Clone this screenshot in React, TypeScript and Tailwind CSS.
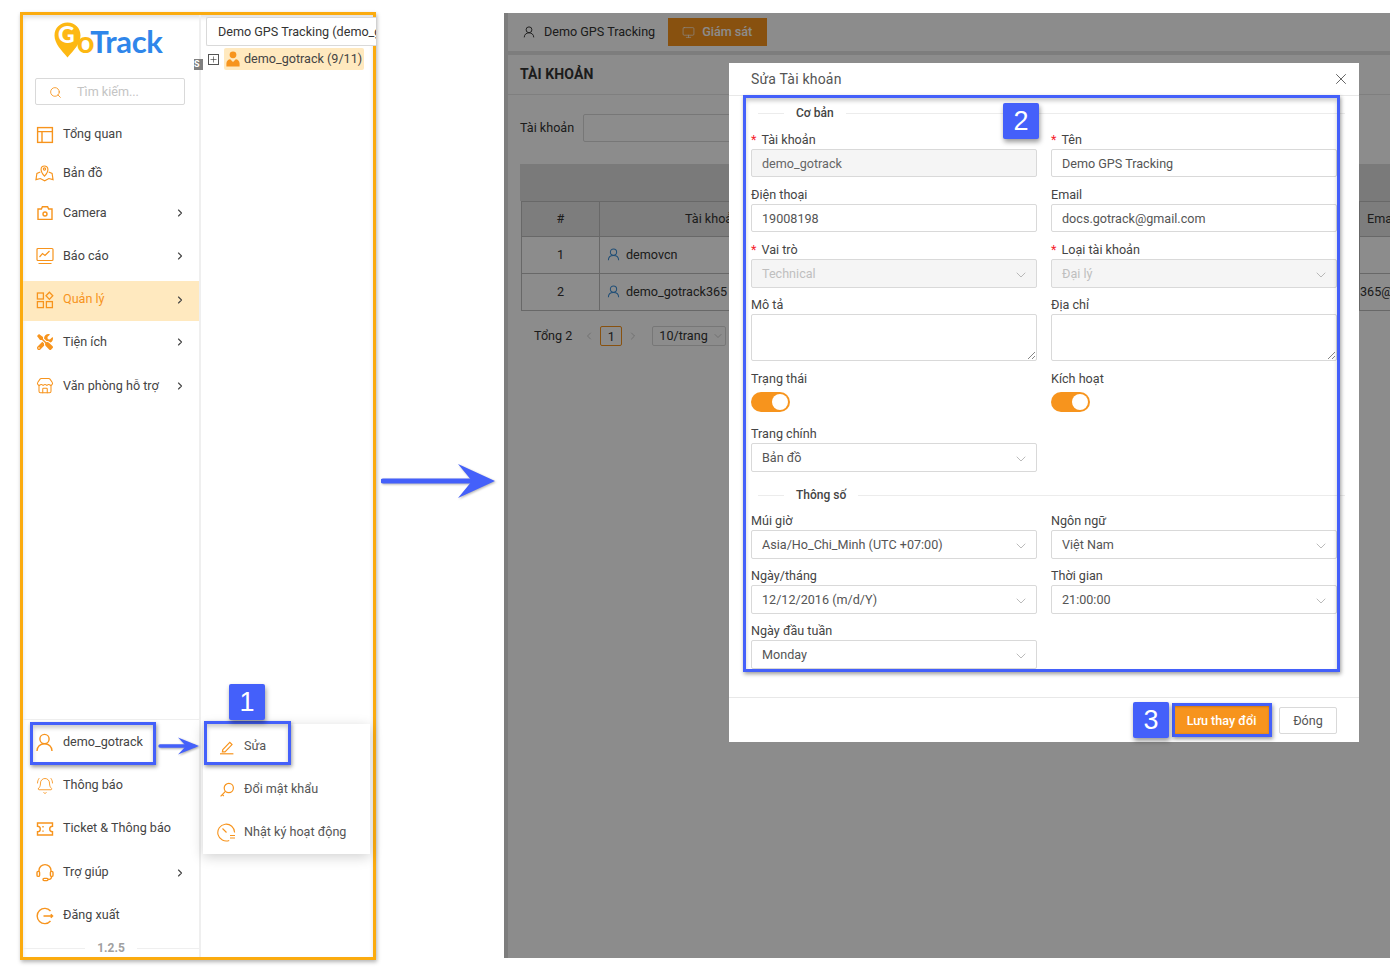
import { ChevronDown, ChevronRight, ChevronLeft, Search, Store, BellRing, X, Monitor, Plus } from 'lucide-react';
import { FaTools } from 'react-icons/fa';
import type { ReactNode } from 'react';

const orange = '#f7941d';

const IconOverview = () => (
  <svg width="18" height="18" viewBox="0 0 18 18" fill="none" stroke={orange} strokeWidth="1.4">
    <rect x="1.6" y="1.6" width="14.8" height="14.8" />
    <path d="M1.6 5.6h14.8M6 5.6v10.8" />
  </svg>
);

const IconMap = () => (
  <svg width="20" height="20" viewBox="0 0 20 20" fill="none" stroke={orange} strokeWidth="1.2">
    <path d="M10 13.4C8 11 6.4 8.8 6.4 6.2a3.6 3.6 0 0 1 7.2 0c0 2.6-1.6 4.8-3.6 7.2z" />
    <circle cx="10" cy="5.8" r="1.2" />
    <path d="M5.6 9L2 10.4 1 17l4.6-1.2 4.6 2.4 4.4-2.4 4.4 1.2-1-6.6L14.4 9" />
  </svg>
);

const IconCamera = () => (
  <svg width="18" height="18" viewBox="0 0 18 18" fill="none" stroke={orange} strokeWidth="1.4">
    <path d="M2 5h3.4l1-2.2h5.2l1 2.2H16v10.4H2z" />
    <circle cx="9" cy="10" r="2" />
  </svg>
);

const IconReport = () => (
  <svg width="18" height="18" viewBox="0 0 18 18" fill="none" stroke={orange} strokeWidth="1.2">
    <rect x="1" y="1.5" width="16" height="12" rx="1" />
    <path d="M3.5 10l3-3.5 2.5 2 4.5-4.5M2.5 16.5h13" />
  </svg>
);

const IconManage = () => (
  <svg width="18" height="18" viewBox="0 0 18 18" fill="none" stroke={orange} strokeWidth="1.3">
    <rect x="1.4" y="2" width="6" height="6" />
    <rect x="1.4" y="10.6" width="6" height="6" />
    <rect x="10.4" y="10.6" width="6" height="6" />
    <path d="M13.4 1.2l3.4 3.6-3.4 3.6-3.4-3.6z" />
  </svg>
);

const IconTicket = () => (
  <svg width="18" height="18" viewBox="0 0 18 18" fill="none" stroke={orange} strokeWidth="1.4">
    <path d="M1.5 3h15v3.2a2.8 2.8 0 0 0 0 5.6V15h-15v-3.2a2.8 2.8 0 0 0 0-5.6z" />
    <path d="M7 6v1.4M7 10.4v1.4" />
  </svg>
);

const IconHeadset = () => (
  <svg width="18" height="19" viewBox="0 0 18 19" fill="none" stroke={orange} strokeWidth="1.4">
    <path d="M3 9V7.6a6 6 0 0 1 12 0V9" />
    <rect x="1" y="8.4" width="2.6" height="5" rx="1.2" />
    <rect x="14.4" y="8.4" width="2.6" height="5" rx="1.2" />
    <path d="M15.6 13.4c0 2-1.6 3-3.6 3" />
    <rect x="7" y="15.4" width="5" height="2.2" rx="1" />
  </svg>
);

const IconUser = () => (
  <svg width="19" height="19" viewBox="0 0 19 19" fill="none" stroke={orange} strokeWidth="1.4">
    <circle cx="9.5" cy="6" r="4.6" />
    <path d="M2 18c0-4.4 3.2-7.2 7.5-7.2S17 13.6 17 18" />
  </svg>
);

const IconLogout = () => (
  <svg width="18" height="18" viewBox="0 0 18 18" fill="none" stroke={orange} strokeWidth="1.4">
    <path d="M14.5 4a7.6 7.6 0 1 0 0 10" />
    <path d="M7.5 9h9M14.8 7.2l1.8 1.8-1.8 1.8" />
  </svg>
);

const IconEdit = () => (
  <svg width="16" height="16" viewBox="0 0 16 16" fill="none" stroke={orange} strokeWidth="1.2">
    <path d="M3.8 10.6l7-7.2 2.2 2.2-7 7.2H3.4z" />
    <path d="M1 14.8h13.4" />
  </svg>
);

const IconKey = () => (
  <svg width="16" height="16" viewBox="0 0 16 16" fill="none" stroke={orange} strokeWidth="1.2">
    <circle cx="9.8" cy="6" r="4.6" />
    <path d="M6.4 9.4L1.6 14.4M3.4 12.6l1.4 1.4" />
  </svg>
);

const IconHistory = () => (
  <svg width="19" height="19" viewBox="0 0 19 19" fill="none" stroke={orange} strokeWidth="1.1">
    <path d="M17.6 9.5a8.4 8.4 0 1 0-5.4 7.9" />
    <path d="M5.5 5.5l4 4M13 12.5h5M13 15h5" />
  </svg>
);

const BossIcon = () => (
  <svg width="14" height="16" viewBox="0 0 14 16" fill={orange}>
    <circle cx="7" cy="3.8" r="3.4" />
    <path d="M0.4 15.4v-3c0-2.6 2-4 3.8-4.2L7 11l2.8-2.8c1.8.2 3.8 1.6 3.8 4.2v3z" />
  </svg>
);

const PersonOutline = ({ color, size }: { color: string; size: number }) => (
  <svg width={size} height={size} viewBox="0 0 19 19" fill="none" stroke={color} strokeWidth="1.5">
    <circle cx="9.5" cy="6" r="4.6" />
    <path d="M2 18c0-4.4 3.2-7.2 7.5-7.2S17 13.6 17 18" />
  </svg>
);

const GoLogo = () => (
  <div className="flex justify-center items-start pt-[6px] h-[63px] pr-[6px]">
    <svg width="27" height="36" viewBox="0 0 27 36" className="-mr-[4px] mt-[1px]">
      <path d="M13.5 0.5C6 0.5 0.5 6 0.5 13.5c0 8 7 15 13 22 6-7 13-14 13-22C26.5 6 21 0.5 13.5 0.5z" fill="#fdb813" />
      <text x="4" y="21" fontFamily="Lato, sans-serif" fontSize="23" fontWeight="900" fill="#fff">G</text>
    </svg>
    <span className="text-[31px] leading-[40px] font-bold tracking-[-0.4px] font-['Lato',sans-serif]">
      <span className="text-[#fdb813]">o</span>
      <span className="text-[#2f86ea]">Track</span>
    </span>
  </div>
);

type Item = { label: string; icon: ReactNode; chevron?: boolean; cls: string; active?: boolean };

const topItems: Item[] = [
  { label: 'Tổng quan', icon: <IconOverview />, cls: 'h-[39px] pt-[4px]' },
  { label: 'Bản đồ', icon: <IconMap />, cls: 'h-[40px] pt-[2px]' },
  { label: 'Camera', icon: <IconCamera />, chevron: true, cls: 'h-[40px] pt-[2px]' },
  { label: 'Báo cáo', icon: <IconReport />, chevron: true, cls: 'h-[40px] mt-[3px] pt-[2px]' },
  { label: 'Quản lý', icon: <IconManage />, chevron: true, cls: 'h-[40px] mt-[6px] pt-[1px] pb-[4px] bg-[#ffe9bf]', active: true },
  { label: 'Tiện ích', icon: <FaTools size={16} color={orange} />, chevron: true, cls: 'h-[40px] pt-[2px]' },
  { label: 'Văn phòng hỗ trợ', icon: <Store size={18} strokeWidth={1.4} color={orange} />, chevron: true, cls: 'h-[40px] mt-[4px] pt-[2px]' },
];

const bottomItems: Item[] = [
  { label: 'demo_gotrack', icon: <IconUser />, cls: 'h-[43px] pt-[2px]' },
  { label: 'Thông báo', icon: <BellRing size={18} strokeWidth={1.2} color={orange} />, cls: 'h-[43px] pt-[2px]' },
  { label: 'Ticket & Thông báo', icon: <IconTicket />, cls: 'h-[43px] pt-[2px]' },
  { label: 'Trợ giúp', icon: <IconHeadset />, chevron: true, cls: 'h-[43px] pt-[4px]' },
  { label: 'Đăng xuất', icon: <IconLogout />, cls: 'h-[43px] pt-[4px]' },
];

const NavRow = ({ item }: { item: Item }) => (
  <div className={`flex items-center pl-[12px] pr-[14px] text-[12.6px] ${item.cls} ${item.active ? 'text-[#f7941d]' : 'text-[#444]'}`}>
    <span className="w-[19px] flex justify-center shrink-0">{item.icon}</span>
    <span className="ml-[9px] flex-1 whitespace-nowrap">{item.label}</span>
    {item.chevron && <ChevronRight size={12} strokeWidth={2.2} color="#444" className="-mr-[1px]" />}
  </div>
);

const Sidebar = () => (
  <aside className="w-[178px] shrink-0 border-r-2 border-[#efefef] flex flex-col h-full">
    <GoLogo />
    <div className="ml-[12px] mr-[14px] h-[27px] border border-[#d9d9d9] rounded-[2px] flex items-center pl-[13px] pt-[2px] mb-[8px]">
      <Search size={13} color={orange} strokeWidth={1.6} />
      <span className="ml-[15px] text-[12.6px] text-[#c4c4c4]">Tìm kiếm...</span>
    </div>
    {topItems.map(item => <NavRow key={item.label} item={item} />)}
    <div className="mt-auto border-t border-[#efefef]">
      {bottomItems.map(item => <NavRow key={item.label} item={item} />)}
      <div className="h-[22px] pt-[4px] flex items-center">
        <div className="flex-1 h-px bg-[#efefef]" />
        <span className="px-[12px] text-[12px] font-bold text-[#a0a0a0]">1.2.5</span>
        <div className="flex-1 h-px bg-[#efefef]" />
      </div>
    </div>
  </aside>
);

const TreePane = () => (
  <div className="flex-1 min-w-0 relative pt-[2px] pl-[5px]">
    <div className="relative h-[29px] -mr-[3px] border border-r-0 border-[#d9d9d9] bg-white rounded-l-[2px] pl-[11px] text-[12.6px] text-[#333] leading-[27px] whitespace-nowrap overflow-hidden">
      Demo GPS Tracking (demo_g
    </div>
    <div className="flex items-center mt-[2px]">
      <span className="w-[11px] h-[11px] border border-[#555] flex items-center justify-center ml-[2px] mr-[5px]">
        <Plus size={9} strokeWidth={1.6} color="#333" />
      </span>
      <div className="flex items-center h-[22px] w-[140px] bg-[#ffe9bf] rounded-[2px] pl-[2px] text-[12.6px] text-[#444]">
        <BossIcon />
        <span className="ml-[4px] whitespace-nowrap">demo_gotrack (9/11)</span>
      </div>
    </div>
    <span className="absolute left-[-7px] top-[44px] w-[9px] h-[11px] bg-[#808080] text-white text-[9px] leading-[11px] font-bold overflow-hidden">S</span>
    <div className="absolute left-[2px] top-[709px] w-[167px] h-[130px] bg-white shadow-[0_3px_12px_rgba(0,0,0,0.18)]">
      {[
        { label: 'Sửa', icon: <IconEdit /> },
        { label: 'Đổi mật khẩu', icon: <IconKey /> },
        { label: 'Nhật ký hoạt động', icon: <IconHistory /> },
      ].map(row => (
        <div key={row.label} className="h-[43px] flex items-center pl-[14px] pt-[2px] text-[12.6px] text-[#555]">
          <span className="w-[19px] flex justify-center">{row.icon}</span>
          <span className="ml-[8px]">{row.label}</span>
        </div>
      ))}
    </div>
  </div>
);

const Label = ({ text, required }: { text: string; required?: boolean }) => (
  <div className="h-[19px] text-[12.6px] leading-[19px] text-[#444] whitespace-nowrap">
    {required && <span className="text-[#f5222d] mr-[5px]">*</span>}
    {text}
  </div>
);

const TextField = ({ label, value, required, disabled }: { label: string; value: string; required?: boolean; disabled?: boolean }) => (
  <div className="mb-[8px]">
    <Label text={label} required={required} />
    <div className={`h-[28px] border border-[#d9d9d9] rounded-[2px] px-[10px] text-[12.6px] leading-[27px] ${disabled ? 'bg-[#f5f5f5] text-[#666]' : 'text-[#555]'}`}>
      {value}
    </div>
  </div>
);

const SelectField = ({ label, value, required, disabled, cls }: { label: string; value: string; required?: boolean; disabled?: boolean; cls: string }) => (
  <div className={cls}>
    <Label text={label} required={required} />
    <div className={`h-[29px] border border-[#d9d9d9] rounded-[2px] pl-[10px] pr-[7px] pt-[2px] text-[12.6px] flex items-center justify-between ${disabled ? 'bg-[#f5f5f5] text-[#bfbfbf]' : 'text-[#555]'}`}>
      <span>{value}</span>
      <ChevronDown size={16} strokeWidth={1} color="#999" />
    </div>
  </div>
);

const AreaField = ({ label }: { label: string }) => (
  <div className="mb-[8px]">
    <Label text={label} />
    <div className="h-[47px] border border-[#d9d9d9] rounded-[2px] relative">
      <svg width="9" height="9" viewBox="0 0 9 9" className="absolute right-0 bottom-0" stroke="#666" strokeWidth="0.8">
        <path d="M1 8L8 1M5 8L8 5" />
      </svg>
    </div>
  </div>
);

const SwitchField = ({ label }: { label: string }) => (
  <div className="mb-[12px]">
    <Label text={label} />
    <div className="mt-[4px] w-[39px] h-[20px] rounded-full bg-[#f7941d] relative">
      <span className="absolute right-[2px] top-[2px] w-[16px] h-[16px] rounded-full bg-white" />
    </div>
  </div>
);

const Legend = ({ text, cls }: { text: string; cls: string }) => (
  <div className={`flex items-center ${cls}`}>
    <div className="w-[26px] ml-[7px] h-px bg-[#ececec]" />
    <span className="px-[12px] text-[12px] font-medium text-[#444] whitespace-nowrap">{text}</span>
    <div className="flex-1 h-px bg-[#ececec]" />
  </div>
);

const AccountModal = () => (
  <div className="absolute left-[225px] top-[50px] w-[630px] h-[679px] bg-white flex flex-col">
    <div className="h-[33px] shrink-0 border-b border-[#e8e8e8] flex items-center justify-between pl-[22px] pr-[9px] text-[14px] text-[#555] tracking-[0.2px]">
      <span>Sửa Tài khoản</span>
      <X size={18} strokeWidth={1.1} color="#444" />
    </div>
    <div className="flex-1 px-[22px]">
      <Legend text="Cơ bản" cls="h-[34px] mr-[-8px]" />
      <div className="grid grid-cols-2 gap-x-[14px]">
        <TextField label="Tài khoản" value="demo_gotrack" required disabled />
        <TextField label="Tên" value="Demo GPS Tracking" required />
        <TextField label="Điện thoại" value="19008198" />
        <TextField label="Email" value="docs.gotrack@gmail.com" />
        <SelectField label="Vai trò" value="Technical" required disabled cls="mb-[7px]" />
        <SelectField label="Loại tài khoản" value="Đại lý" required disabled cls="mb-[7px]" />
        <AreaField label="Mô tả" />
        <AreaField label="Địa chỉ" />
        <SwitchField label="Trạng thái" />
        <SwitchField label="Kích hoạt" />
        <SelectField label="Trang chính" value="Bản đồ" cls="" />
      </div>
      <Legend text="Thông số" cls="h-[34px] mt-[6px] mr-[-8px]" />
      <div className="grid grid-cols-2 gap-x-[14px] -mt-[1px]">
        <SelectField label="Múi giờ" value="Asia/Ho_Chi_Minh (UTC +07:00)" cls="mb-[7px]" />
        <SelectField label="Ngôn ngữ" value="Việt Nam" cls="mb-[7px]" />
        <SelectField label="Ngày/tháng" value="12/12/2016 (m/d/Y)" cls="mb-[7px]" />
        <SelectField label="Thời gian" value="21:00:00" cls="mb-[7px]" />
        <SelectField label="Ngày đầu tuần" value="Monday" cls="" />
      </div>
    </div>
    <div className="h-[45px] shrink-0 border-t border-[#e8e8e8] flex items-center justify-end gap-[9px] pr-[22px] text-[12.6px]">
      <button className="w-[97px] h-[29px] pt-[2px] bg-[#f7941d] text-white font-medium shadow-[inset_0_0_3px_rgba(120,60,0,0.7)]">Lưu thay đổi</button>
      <button className="w-[58px] h-[27px] pt-[2px] border border-[#d9d9d9] text-[#555] rounded-[2px]">Đóng</button>
    </div>
  </div>
);

const DimmedPage = () => (
  <div className="h-full pl-[4px] bg-[#e4e4e4] text-[12.6px] text-[#333]">
    <div className="h-[38px] bg-white flex items-center pl-[15px]">
      <PersonOutline color="#333" size={12} />
      <span className="ml-[9px]">Demo GPS Tracking</span>
      <span className="ml-[13px] w-[99px] h-[28px] bg-[#f7941d] text-white flex items-center pl-[14px] font-medium">
        <Monitor size={13} strokeWidth={1.2} />
        <span className="ml-[7px]">Giám sát</span>
      </span>
    </div>
    <div className="mt-[4px] h-[903px] bg-white">
      <div className="h-[40px] border-b border-[#e8e8e8] pl-[12px] flex items-center text-[14px] font-bold tracking-[0.1px]">TÀI KHOẢN</div>
      <div className="flex items-center pl-[12px] mt-[19px]">
        <span>Tài khoản</span>
        <span className="ml-[9px] w-[300px] h-[28px] border border-[#d9d9d9] rounded-[2px]" />
      </div>
      <div className="mt-[22px] ml-[12px] overflow-hidden">
        <div className="h-[37px] bg-[#dedede]" />
        <table className="w-[1000px] table-fixed border-collapse ml-[1px]">
          <tbody>
            <tr className="h-[35px] bg-[#e4e4e4]">
              <td className="w-[78px] border border-[#bdbdbd] text-center">#</td>
              <td className="w-[760px] border border-[#bdbdbd] pl-[85px]">Tài khoản</td>
              <td className="border border-[#bdbdbd] pl-[7px]">Email</td>
            </tr>
            <tr className="h-[37px]">
              <td className="border border-[#bdbdbd] text-center">1</td>
              <td className="border border-[#bdbdbd] pl-[7px]">
                <span className="flex items-center"><PersonOutline color="#3b8fd8" size={13} /><span className="ml-[6px]">demovcn</span></span>
              </td>
              <td className="border border-[#bdbdbd]" />
            </tr>
            <tr className="h-[37px]">
              <td className="border border-[#bdbdbd] text-center">2</td>
              <td className="border border-[#bdbdbd] pl-[7px]">
                <span className="flex items-center"><PersonOutline color="#3b8fd8" size={13} /><span className="ml-[6px]">demo_gotrack365</span></span>
              </td>
              <td className="border border-[#bdbdbd] pl-[7px] whitespace-nowrap overflow-hidden">
                <span className="block -ml-[7px]">365@gmail.com</span>
              </td>
            </tr>
          </tbody>
        </table>
      </div>
      <div className="flex items-center ml-[26px] mt-[15px] h-[20px]">
        <span>Tổng 2</span>
        <ChevronLeft size={12} strokeWidth={1} color="#999" className="ml-[11px]" />
        <span className="ml-[5px] w-[22px] h-[20px] border border-[#f7941d] rounded-[2px] text-center leading-[20px]">1</span>
        <ChevronRight size={12} strokeWidth={1} color="#999" className="ml-[5px]" />
        <span className="ml-[13px] w-[74px] h-[20px] border border-[#d9d9d9] rounded-[2px] pl-[6px] flex items-center">
          10/trang
          <ChevronDown size={12} strokeWidth={1} color="#999" className="ml-[4px]" />
        </span>
      </div>
    </div>
  </div>
);

const Badge = ({ text, cls }: { text: string; cls: string }) => (
  <div className={`absolute w-[36px] h-[36px] bg-[#4460fa] rounded-[2px] text-white text-[27px] leading-[37px] text-center shadow-[1px_3px_5px_rgba(0,0,0,0.4)] font-['Liberation_Sans',sans-serif] ${cls}`}>
    {text}
  </div>
);

const Frame = ({ cls }: { cls: string }) => (
  <div className={`absolute border-[3px] border-[#4460fa] shadow-[1px_2px_4px_rgba(0,0,0,0.4),inset_0_3px_4px_rgba(0,0,0,0.2)] ${cls}`} />
);

export default function App() {
  return (
    <div className="relative w-[1390px] h-[970px] bg-white overflow-hidden flex items-start font-['Roboto',sans-serif]">
      <div className="ml-[20px] mt-[12px] w-[356px] h-[948px] shrink-0 border-[3px] border-[#fbab0f] shadow-[1px_2px_4px_rgba(0,0,0,0.3),inset_0_3px_4px_rgba(0,0,0,0.12)] flex">
        <Sidebar />
        <TreePane />
      </div>

      <div className="relative ml-[128px] mt-[13px] w-[886px] h-[945px] shrink-0 overflow-hidden">
        <DimmedPage />
        <div className="absolute inset-0 bg-black/45" />
        <AccountModal />
      </div>

      <Frame cls="left-[30px] top-[722px] w-[126px] h-[43px]" />
      <Frame cls="left-[204px] top-[721px] w-[87px] h-[44px]" />
      <Frame cls="left-[743px] top-[95px] w-[597px] h-[577px]" />
      <div className="absolute left-[1172px] top-[703px] w-[100px] h-[34px] border-[3px] border-[#4460fa] shadow-[1px_2px_4px_rgba(0,0,0,0.4)]" />
      <Badge text="1" cls="left-[229px] top-[684px]" />
      <Badge text="2" cls="left-[1003px] top-[103px]" />
      <Badge text="3" cls="left-[1133px] top-[702px]" />

      <svg width="42" height="20" viewBox="0 0 42 20" className="absolute left-[158px] top-[736px] drop-shadow-[1px_1px_1px_rgba(0,0,0,0.35)]">
        <path d="M2 10H36" stroke="#4460fa" strokeWidth="3.4" strokeLinecap="round" />
        <path d="M20 1.5L41 10 20 18.5 28 10z" fill="#4460fa" />
      </svg>
      <svg width="116" height="38" viewBox="0 0 116 38" className="absolute left-[381px] top-[462px] drop-shadow-[1px_1px_1px_rgba(0,0,0,0.3)]">
        <path d="M2 19H106" stroke="#4460fa" strokeWidth="5" strokeLinecap="round" />
        <path d="M77 2L114 19 77 36 91 19z" fill="#4460fa" />
      </svg>
    </div>
  );
}
